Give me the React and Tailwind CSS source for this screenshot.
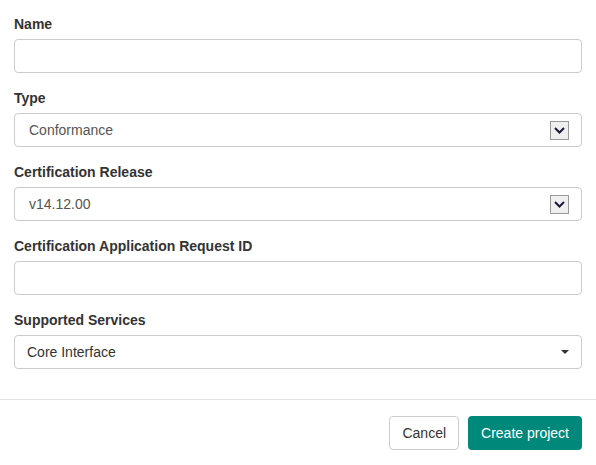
import React from 'react';

const Label = ({ children }) => (
    <label className="block text-[14px] font-bold text-[#333] leading-[20px] mb-[5px]">{children}</label>
);

const NativeSelect = ({ value }) => (
    <div className="relative h-[34px] rounded-[4px] border border-[#ccc] bg-white flex items-center pl-[14px]">
        <span className="text-[14px] text-[#555]">{value}</span>
        <div className="absolute right-[12px] top-[7px] w-[19px] h-[19px] border border-[#999] bg-[#efefef] flex items-center justify-center">
            <svg width="11" height="7" viewBox="0 0 11 7">
                <path d="M1 1 L5.5 5.5 L10 1" fill="none" stroke="#1a1a3a" strokeWidth="2" />
            </svg>
        </div>
    </div>
);

const App = () => {
    return (
        <div className="w-[596px] h-[465px] bg-white font-['Liberation_Sans',Arial,sans-serif] text-[#333]">
            <div className="px-[14px] pt-[14px] pb-[15px] flex flex-col gap-[15px]">
                <div>
                    <Label>Name</Label>
                    <div className="h-[34px] rounded-[4px] border border-[#ccc]" />
                </div>
                <div>
                    <Label>Type</Label>
                    <NativeSelect value="Conformance" />
                </div>
                <div>
                    <Label>Certification Release</Label>
                    <NativeSelect value="v14.12.00" />
                </div>
                <div>
                    <Label>Certification Application Request ID</Label>
                    <div className="h-[34px] rounded-[4px] border border-[#ccc]" />
                </div>
                <div>
                    <Label>Supported Services</Label>
                    <div className="h-[34px] rounded-[4px] border border-[#ccc] flex items-center justify-between pl-[12px] pr-[12px]">
                        <span className="text-[14px] text-[#333]">Core Interface</span>
                        <svg width="8" height="4" viewBox="0 0 8 4"><path d="M0 0 L8 0 L4 4 Z" fill="#333" /></svg>
                    </div>
                </div>
            </div>
            <div className="mt-[15px] border-t border-[#e5e5e5] px-[14px] pt-[16px] flex justify-end gap-[9px]">
                <button className="h-[34px] px-[12px] rounded-[4px] border border-[#ccc] bg-white text-[14px] text-[#333]">Cancel</button>
                <button className="h-[34px] px-[13px] rounded-[4px] bg-[#00897b] text-[14px] text-white">Create project</button>
            </div>
        </div>
    );
};

export default App;
